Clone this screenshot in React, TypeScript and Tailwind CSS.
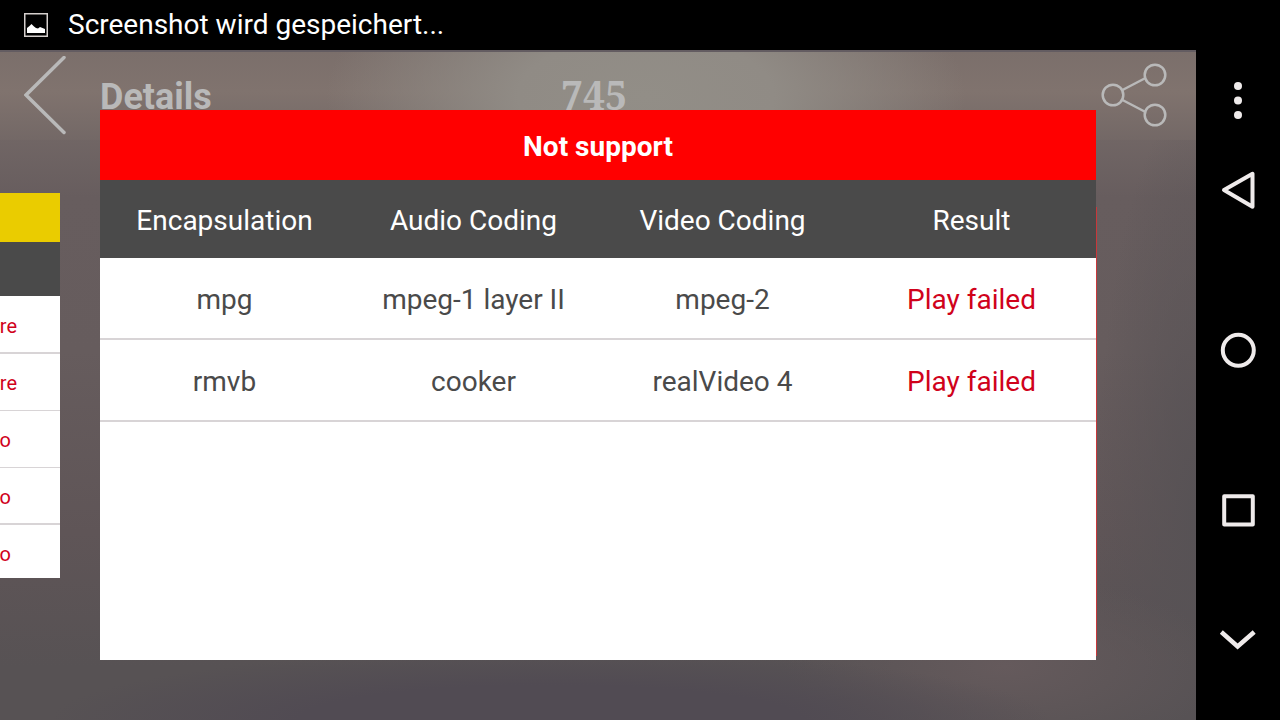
import React from "react";

type Format = { encapsulation: string; audio: string; video: string; result: string };

const columns = ["Encapsulation", "Audio Coding", "Video Coding", "Result"];

const formats: Format[] = [
  { encapsulation: "mpg", audio: "mpeg-1 layer II", video: "mpeg-2", result: "Play failed" },
  { encapsulation: "rmvb", audio: "cooker", video: "realVideo 4", result: "Play failed" },
];

const previousResults = ["ure", "ure", "o", "o", "o"];

function StatusBar() {
  return (
    <div className="flex h-[50px] shrink-0 items-center bg-black pl-6 text-white">
      <svg width="24" height="24" viewBox="0 0 24 24" fill="none" aria-hidden="true">
        <rect x="0.75" y="0.75" width="22.5" height="22.5" stroke="#d5cfcd" strokeWidth="1.5" />
        <path d="M3 20V15L5.500 13L7.500 11L10 13.500L12 15L14 15.500L16 14L18.500 15L21 16V20Z" fill="#fff" />
      </svg>
      <p className="pl-5 text-[28px] leading-8">Screenshot wird gespeichert...</p>
    </div>
  );
}

function Header() {
  return (
    <header className="grid h-[90px] shrink-0 grid-cols-[1fr_auto_1fr] border-t-2 border-[#635c61] bg-[radial-gradient(ellipse_320px_150px_at_54%_50%,#928e87_0%,#908b85_40%,#857a7500_100%),linear-gradient(180deg,#7b6f6b_0%,#80736e_45%,#736866_100%)] text-[#b9b9b9]">
      <div className="flex items-start">
        <button type="button" aria-label="Back" className="pt-1 pl-6">
          <svg width="42" height="80" viewBox="0 0 42 80" fill="none" stroke="currentColor" strokeWidth="3.500" strokeLinecap="round" aria-hidden="true">
            <path d="M40 1.500L2 39L40 76.500" />
          </svg>
        </button>
        <h1 className="pt-[25px] pl-[34px] text-[36px] leading-10 font-bold">Details</h1>
      </div>
      <p className="pt-[23px] pr-2 font-['Noto_Serif','Liberation_Serif',serif] text-[39px] leading-10 font-bold">745</p>
      <button type="button" aria-label="Share" className="flex justify-self-end pt-[11px] pr-[29px]">
        <svg width="66" height="64" viewBox="0 0 66 64" fill="none" stroke="currentColor" strokeWidth="2.500" aria-hidden="true">
          <circle cx="12" cy="32" r="10.300" />
          <circle cx="54" cy="12" r="10.300" />
          <circle cx="54" cy="52" r="10.300" />
          <path d="M21.500 27L44.500 15M21.500 37L44.500 49" />
        </svg>
      </button>
    </header>
  );
}

function PreviousCard() {
  return (
    <div className="w-[60px] shrink-0 self-start bg-white">
      <div className="h-[49px] bg-[#eacc00]" />
      <div className="h-[54px] bg-[#4a4a4a]" />
      <ul className="pt-px">
        {previousResults.map((text, i) => (
          <li
            key={i}
            className="flex h-[57px] items-center justify-end border-b border-[#d8d4d6] pt-0.5 pr-[43px] text-[20px] leading-6 text-[#d0021b] first:border-b-2 nth-4:border-b-2 last:h-[53px] last:border-b-0 last:pt-1 nth-[n+3]:pr-[49px]"
          >
            {text}
          </li>
        ))}
      </ul>
    </div>
  );
}

function FormatDialog() {
  return (
    <section
      role="dialog"
      aria-labelledby="dialog-title"
      className="absolute inset-x-[100px] inset-y-[60px] bg-white"
    >
      <h2
        id="dialog-title"
        className="flex h-[70px] items-center justify-center bg-[#ff0000] pt-1 text-[28px] leading-8 font-bold text-white"
      >
        Not support
      </h2>
      <table className="w-full table-fixed border-separate border-spacing-0 text-center text-[28px] leading-8 text-[#4a4a4a]">
        <thead>
          <tr className="h-[78px] bg-[#4a4a4a] text-white">
            {columns.map((name) => (
              <th key={name} scope="col" className="p-0 pt-1 font-normal">
                {name}
              </th>
            ))}
          </tr>
        </thead>
        <tbody>
          {formats.map((f) => (
            <tr key={f.encapsulation} className="h-[82px]">
              <td className="border-b-2 border-[#d8d4d6] p-0 pt-1">{f.encapsulation}</td>
              <td className="border-b-2 border-[#d8d4d6] p-0 pt-1">{f.audio}</td>
              <td className="border-b-2 border-[#d8d4d6] p-0 pt-1">{f.video}</td>
              <td className="border-b-2 border-[#d8d4d6] p-0 pt-1 text-[#d0021b]">{f.result}</td>
            </tr>
          ))}
        </tbody>
      </table>
    </section>
  );
}

function NavigationBar() {
  return (
    <nav className="flex w-[84px] shrink-0 flex-col bg-black pt-[50px] text-[#efebeb]">
      <button type="button" aria-label="Menu" className="flex h-[100px] items-center justify-center">
        <svg width="40" height="40" viewBox="0 0 40 40" fill="currentColor" aria-hidden="true">
          <circle cx="20" cy="6" r="4" />
          <circle cx="20" cy="20.500" r="4" />
          <circle cx="20" cy="35" r="4" />
        </svg>
      </button>
      <button type="button" aria-label="Back" className="flex h-20 items-center justify-center">
        <svg width="40" height="40" viewBox="0 0 40 40" fill="none" stroke="currentColor" strokeWidth="4" strokeLinejoin="round" aria-hidden="true">
          <path d="M6 20L34.500 3.800V36.700Z" />
        </svg>
      </button>
      <button type="button" aria-label="Home" className="mt-10 flex h-40 items-center justify-center">
        <svg width="40" height="40" viewBox="0 0 40 40" fill="none" stroke="currentColor" strokeWidth="4" aria-hidden="true">
          <circle cx="20.300" cy="20.300" r="15.500" />
        </svg>
      </button>
      <button type="button" aria-label="Recent apps" className="flex h-40 items-center justify-center">
        <svg width="40" height="40" viewBox="0 0 40 40" fill="none" stroke="currentColor" strokeWidth="4" strokeLinejoin="round" aria-hidden="true">
          <rect x="6.200" y="6.200" width="28.600" height="28.300" />
        </svg>
      </button>
      <button type="button" aria-label="Hide navigation" className="flex h-[100px] items-center justify-center">
        <svg width="40" height="40" viewBox="0 0 40 40" fill="none" stroke="currentColor" strokeWidth="4.500" strokeLinecap="square" aria-hidden="true">
          <path d="M5 13.500L19.600 26.500L34.500 13.500" />
        </svg>
      </button>
    </nav>
  );
}

export default function App() {
  return (
    <div className="flex min-h-screen bg-black font-[Roboto,'Liberation_Sans',sans-serif]">
      <div className="flex min-w-0 flex-1 flex-col">
        <StatusBar />
        <main className="relative flex flex-1 flex-col bg-[radial-gradient(ellipse_500px_70px_at_46%_100%,#514b53_0%,#514b53_50%,#514b5300_100%),radial-gradient(ellipse_220px_90px_at_84%_92%,#655a5c_0%,#655a5c00_100%),radial-gradient(ellipse_100px_420px_at_100%_70%,#575255_0%,#57525500_100%),linear-gradient(180deg,#716665_13%,#675d5e_22%,#665c5d_45%,#5f5557_72%,#575254_92%)]">
          <Header />
          <div className="flex flex-1 pt-[53px]">
            <PreviousCard />
            <div className="mt-[14px] mr-[99px] mb-16 ml-10 flex-1 bg-[#c8383b]" />
          </div>
          <FormatDialog />
        </main>
      </div>
      <NavigationBar />
    </div>
  );
}
